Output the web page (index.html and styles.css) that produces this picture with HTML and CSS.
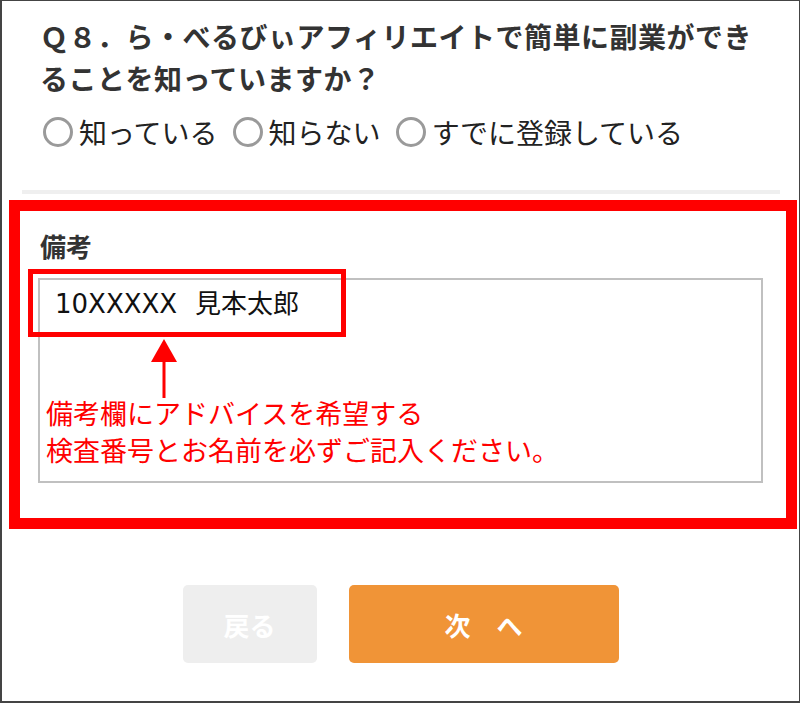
FILE: index.html
```html
<!DOCTYPE html>
<html lang="ja">
<head>
<meta charset="utf-8">
<title>アンケート</title>
<link rel="stylesheet" href="styles.css">
</head>
<body>
<div class="frame">
  <h2 class="question">Ｑ８．ら・べるびぃアフィリエイトで簡単に副業ができることを知っていますか？</h2>
  <div class="options">
    <label class="option"><span class="radio"></span><span class="opt-text">知っている</span></label>
    <label class="option"><span class="radio"></span><span class="opt-text">知らない</span></label>
    <label class="option"><span class="radio"></span><span class="opt-text">すでに登録している</span></label>
  </div>
  <div class="divider"></div>
  <section class="remarks">
    <div class="remarks-label">備考</div>
    <div class="remarks-field"><span class="remarks-value"><span class="remarks-id">10XXXXX</span> 見本太郎</span></div>
    <div class="highlight"></div>
    <svg class="arrow" width="28" height="60" viewBox="0 0 28 60">
      <polygon points="14,0 1,23 27,23" fill="#ff0000"/>
      <rect x="12.5" y="22" width="3" height="37" fill="#ff0000"/>
    </svg>
    <div class="note">備考欄にアドバイスを希望する<br>検査番号とお名前を必ずご記入ください。</div>
  </section>
  <div class="buttons">
    <button class="btn btn-back" type="button">戻る</button>
    <button class="btn btn-next" type="button">次　へ</button>
  </div>
</div>
</body>
</html>
```

FILE: styles.css
```css
html, body {
  margin: 0;
  padding: 0;
  background: #ffffff;
}

body {
  font-family: "Noto Sans CJK JP", "Noto Sans", sans-serif;
}

.frame {
  width: 800px;
  height: 703px;
  box-sizing: border-box;
  border-style: solid;
  border-color: #444444;
  border-width: 1px 1px 2px 2px;
  overflow: hidden;
}

.question {
  margin: 0;
  padding: 14px 39px 0 38px;
  font-size: 28px;
  font-weight: bold;
  line-height: 42px;
  letter-spacing: 0.5px;
  color: #333333;
}

.options {
  display: flex;
  align-items: center;
  margin-top: 12px;
  padding-left: 41px;
  height: 42px;
}

.option {
  display: flex;
  align-items: center;
  margin-right: 15px;
}

.radio {
  width: 30px;
  height: 30px;
  box-sizing: border-box;
  border: 3px solid #9a9a9a;
  border-radius: 50%;
  margin-right: 6px;
}

.opt-text {
  font-size: 28px;
  line-height: 42px;
  color: #222222;
}

.divider {
  margin: 37px 0 0 20px;
  width: 758px;
  height: 4px;
  background: #efefef;
}

.remarks {
  position: relative;
  margin: 6px 0 0 7px;
  width: 788px;
  box-sizing: border-box;
  border: 11px solid #ff0000;
  padding: 13px 23px 35px 18px;
}

.remarks-label {
  padding-left: 2px;
  padding-top: 2px;
  font-size: 26px;
  font-weight: bold;
  line-height: 39px;
  color: #333333;
}

.remarks-field {
  margin-top: 13px;
  height: 205px;
  box-sizing: border-box;
  border: 2px solid #c0c0c0;
  padding: 2px 15px;
}

.remarks-value {
  font-size: 26px;
  line-height: 39px;
  color: #111111;
  word-spacing: 12px;
}

.remarks-id {
  font-family: "DejaVu Sans", "Noto Sans CJK JP", sans-serif;
  word-spacing: 0;
}

.highlight {
  position: absolute;
  left: 8px;
  top: 58px;
  width: 318px;
  height: 68px;
  box-sizing: border-box;
  border: 5px solid #ff0000;
}

.arrow {
  position: absolute;
  left: 130px;
  top: 128px;
  display: block;
}

.note {
  position: absolute;
  left: 26px;
  top: 183px;
  font-size: 27px;
  line-height: 37px;
  color: #ff0000;
  white-space: nowrap;
}

.buttons {
  display: flex;
  justify-content: center;
  gap: 32px;
  margin-top: 56px;
}

.btn {
  height: 78px;
  border: none;
  border-radius: 5px;
  font-family: "Noto Sans CJK JP", "Noto Sans", sans-serif;
  font-size: 26px;
  font-weight: bold;
  color: #ffffff;
  padding: 0;
}

.btn-back {
  width: 134px;
  background: #eeeeee;
}

.btn-next {
  width: 270px;
  background: #f09437;
}
```
